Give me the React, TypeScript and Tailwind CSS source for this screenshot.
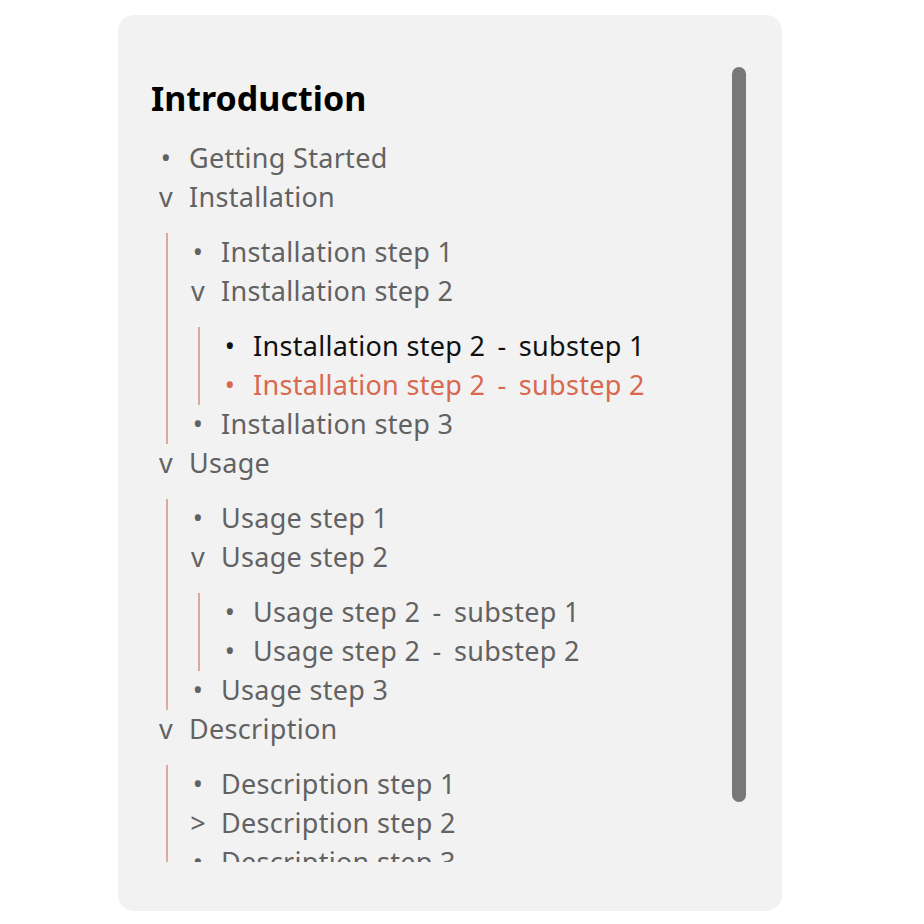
import type { ReactNode } from 'react';

type Item = {
  label: string;
  marker?: 'dot' | 'open' | 'closed';
  tone?: 'normal' | 'active' | 'current';
  children?: Item[];
};

const TOC: Item[] = [
  { label: 'Getting Started' },
  {
    label: 'Installation',
    marker: 'open',
    children: [
      { label: 'Installation step 1' },
      {
        label: 'Installation step 2',
        marker: 'open',
        children: [
          { label: 'Installation step 2 - substep 1', tone: 'active' },
          { label: 'Installation step 2 - substep 2', tone: 'current' },
        ],
      },
      { label: 'Installation step 3' },
    ],
  },
  {
    label: 'Usage',
    marker: 'open',
    children: [
      { label: 'Usage step 1' },
      {
        label: 'Usage step 2',
        marker: 'open',
        children: [
          { label: 'Usage step 2 - substep 1' },
          { label: 'Usage step 2 - substep 2' },
        ],
      },
      { label: 'Usage step 3' },
    ],
  },
  {
    label: 'Description',
    marker: 'open',
    children: [
      { label: 'Description step 1' },
      { label: 'Description step 2', marker: 'closed' },
      { label: 'Description step 3' },
    ],
  },
];

function Label({ text }: { text: string }) {
  const [head, tail] = text.split(' - ');
  if (tail === undefined) return <span className="ml-[8px]">{text}</span>;
  return (
    <span className="ml-[8px]">
      {head} <span className="px-[5px]">-</span> {tail}
    </span>
  );
}

function Row({ item }: { item: Item }) {
  const color =
    item.tone === 'current'
      ? 'text-[#d8694f]'
      : item.tone === 'active'
        ? 'text-[#111111]'
        : 'text-[#626262]';
  const mark = item.marker === 'open' ? 'v' : item.marker === 'closed' ? '>' : '•';
  return (
    <div className={`flex h-[39px] items-center whitespace-nowrap ${color}`}>
      <span className="w-[30px] shrink-0 text-center">{mark}</span>
      <Label text={item.label} />
    </div>
  );
}

function Tree({ items }: { items: Item[] }): ReactNode {
  return (
    <ul className="flex flex-col">
      {items.map(item => (
        <li key={item.label}>
          <Row item={item} />
          {item.children && (
            <div className="mt-[16px] ml-[15px] border-l-2 border-[#dca99d] pl-[15px]">
              <Tree items={item.children} />
            </div>
          )}
        </li>
      ))}
    </ul>
  );
}

export default function App() {
  return (
    <div className="min-h-screen bg-white pt-[15px] pl-[118px]" style={{ fontFamily: '"Noto Sans", "Noto Sans CJK KR", sans-serif' }}>
      <div className="flex h-[896px] w-[664px] rounded-[16px] bg-[#f2f2f2] pl-[33px] pr-[36px]">
        <div className="h-[847px] flex-1 overflow-hidden">
          <h2 className="mt-[63px] text-[34px] leading-[40px] font-bold text-black">Introduction</h2>
          <div className="mt-[21px] text-[27px] tracking-[0.3px]">
            <Tree items={TOC} />
          </div>
        </div>
        <div className="mt-[52px] h-[735px] w-[14px] rounded-full bg-[#787878]" />
      </div>
    </div>
  );
}
